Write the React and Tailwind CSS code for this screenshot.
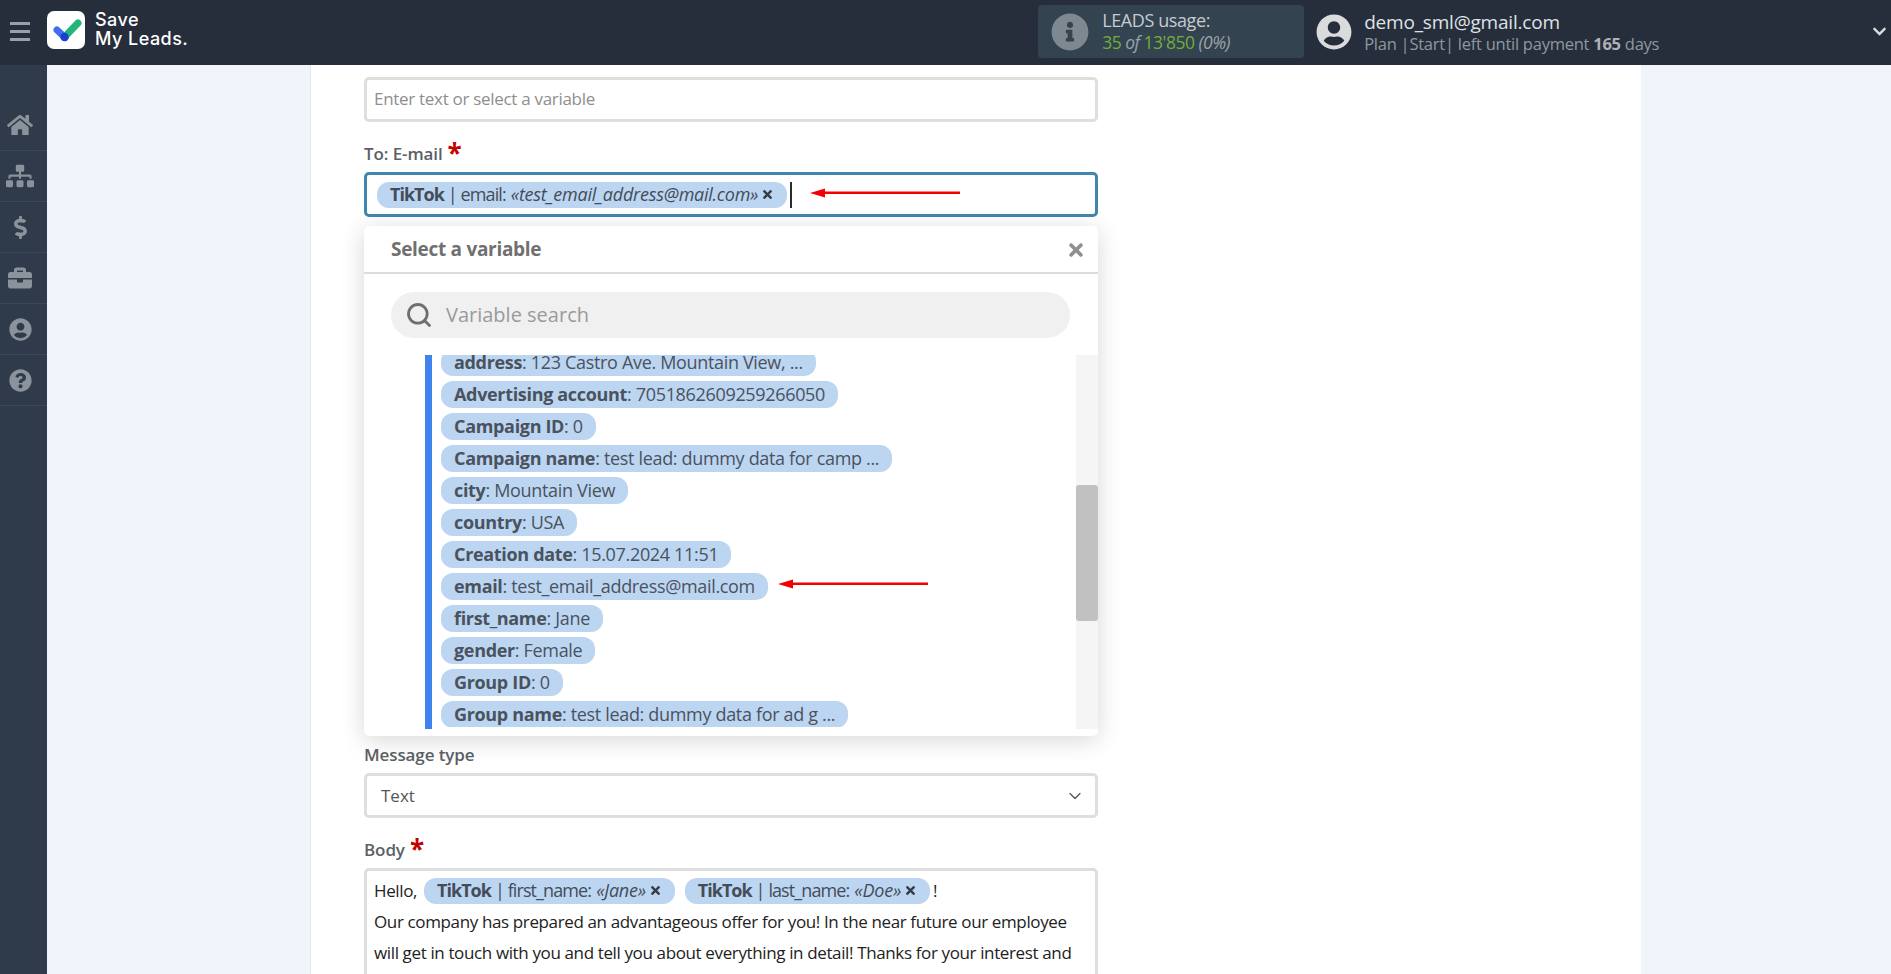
import React from 'react';
import { FaHome, FaSitemap, FaDollarSign, FaBriefcase, FaUserCircle, FaQuestionCircle, FaInfoCircle, FaTimes, FaChevronDown } from 'react-icons/fa';
import { Search, ChevronDown } from 'lucide-react';

const navIcons = [
  { Icon: FaHome, size: 26 },
  { Icon: FaSitemap, size: 28 },
  { Icon: FaDollarSign, size: 23 },
  { Icon: FaBriefcase, size: 24 },
  { Icon: FaUserCircle, size: 23 },
  { Icon: FaQuestionCircle, size: 23 },
];

const variables = [
  ['address', '123 Castro Ave. Mountain View, ...'],
  ['Advertising account', '7051862609259266050'],
  ['Campaign ID', '0'],
  ['Campaign name', 'test lead: dummy data for camp ...'],
  ['city', 'Mountain View'],
  ['country', 'USA'],
  ['Creation date', '15.07.2024 11:51'],
  ['email', 'test_email_address@mail.com'],
  ['first_name', 'Jane'],
  ['gender', 'Female'],
  ['Group ID', '0'],
  ['Group name', 'test lead: dummy data for ad g ...'],
];

function RedArrow() {
  return (
    <svg width="150" height="10" viewBox="0 0 150 10" className="shrink-0">
      <path d="M0 5 L15 0.5 L15 3.5 L150 3.5 L150 6 L15 6 L15 9.5 Z" fill="#f50000" />
    </svg>
  );
}

function Chip({ source, name, value }) {
  return (
    <span className="inline-flex h-[26px] items-center rounded-[12px] bg-[#bcd6f2] px-[13px] text-[18px] whitespace-nowrap text-[#444c58]">
      <b className="font-bold tracking-[-1px]">{source}</b>
      <span className="ml-[4px] tracking-[-0.9px]">| {name}:</span>
      <i className="ml-[5px] tracking-[-0.25px]">«{value}»</i>
      <FaTimes size={13} className="ml-[3px] text-[#343c48]" />
    </span>
  );
}

function Label({ children, required }) {
  return (
    <div className="flex h-6 items-center gap-[5px] text-[17px] font-semibold tracking-[-0.1px] text-[#5b5f66]">
      {children}
      {required && <span className="-mt-[3px] text-[26px] leading-none font-bold text-[#c40000]">*</span>}
    </div>
  );
}

function Logo() {
  return (
    <svg width="38" height="38" viewBox="0 0 38 38" className="mb-[4px]">
      <rect width="38" height="38" rx="7" fill="#ffffff" />
      <path d="M10 19 L18 26.5" stroke="#3f6ff0" strokeWidth="7" strokeLinecap="round" />
      <path d="M17.5 26 L31 12" stroke="#22b67a" strokeWidth="7" strokeLinecap="round" />
      <circle cx="17.5" cy="26" r="4.2" fill="#1c3fcf" />
    </svg>
  );
}

export default function App() {
  return (
    <div className="flex h-[974px] w-full flex-col overflow-hidden font-['Open_Sans',sans-serif]">
      {/* Top bar */}
      <header className="flex h-[65px] shrink-0 items-center bg-[#262e3b] pb-[2px]">
        <div className="flex w-[47px] justify-center pr-[7px]">
          <div className="flex w-5 flex-col gap-[5px]">
            <span className="h-[3px] bg-[#99a0a8]" />
            <span className="h-[3px] bg-[#99a0a8]" />
            <span className="h-[3px] bg-[#99a0a8]" />
          </div>
        </div>
        <Logo />
        <div className="mb-[5px] ml-[10px] font-['Inter',sans-serif] text-[18px] leading-[19px] font-medium tracking-[0.45px] text-white">
          Save<br />My Leads.
        </div>

        <div className="ml-[850px] flex h-[53px] w-[266px] items-center rounded bg-[#344350] pl-[13px]">
          <FaInfoCircle size={38} className="text-[#7d8890]" />
          <div className="ml-[13px] -mt-[1px] text-[18px] leading-[22px] tracking-[-0.4px]">
            <div className="text-[#c5cbd0]">LEADS usage:</div>
            <div className="text-[17.5px] tracking-[-0.5px] text-[#6fae3c]">35 <i className="text-[#9aa3aa]">of</i> 13'850 <i className="text-[#9aa3aa]">(0%)</i></div>
          </div>
        </div>
        <FaUserCircle size={36} className="ml-[12px] text-[#d9dbdc]" />
        <div className="ml-[12px]">
          <div className="text-[19px] leading-[24px] tracking-[-0.2px] text-[#dfe2e5]">demo_sml@gmail.com</div>
          <div className="text-[16.5px] leading-[19px] tracking-[-0.25px] text-[#8f98a1]">
            Plan |Start| left until payment <b className="text-[#adb3b9]">165</b> days
          </div>
        </div>
        <FaChevronDown size={15} className="ml-auto mr-[4px] text-[#d9dbdc]" />
      </header>

      <div className="flex min-h-0 flex-1">
        {/* Side menu */}
        <nav className="w-[47px] shrink-0 bg-[#2f3a4a] pt-[35px]">
          {navIcons.map(({ Icon, size }, i) => (
            <div key={i} className="flex h-[51px] items-center justify-center border-b border-[#3d4858] pr-[7px]">
              <Icon size={size} className="text-[#8a929c]" />
            </div>
          ))}
        </nav>

        <main className="min-w-0 flex-1 bg-[#f2f4fc]">
          <div className="ml-[263px] h-full w-[1331px] border-l border-[#e6e8ef] bg-white pt-3 pl-[53px]">
            <div className="w-[734px]">
              <div className="flex h-[45px] items-center rounded-[5px] border-[3px] border-[#dedede] pb-[2px] pl-[7px] text-[17px] tracking-[-0.3px] text-[#8e8e8e]">
                Enter text or select a variable
              </div>

              <div className="mt-5 mb-[6px]">
                <Label required>To: E-mail</Label>
              </div>

              <div className="relative mb-[526px]">
                <div className="flex h-[45px] items-center rounded-[5px] border-[3px] border-[#3f88ac] pl-[10px]">
                  <Chip source="TikTok" name="email" value="test_email_address@mail.com" />
                  <span className="ml-[3px] h-[26px] w-[2px] bg-[#2b2b2b]" />
                  <span className="ml-[18px] -mt-[3px]"><RedArrow /></span>
                </div>

                {/* Variable dropdown */}
                <div className="absolute top-[54px] left-0 h-[510px] w-full rounded-[5px] bg-white shadow-[0_4px_24px_rgba(0,0,0,0.16)]">
                  <div className="flex h-[48px] items-center justify-between border-b-2 border-[#dcdcdc] pt-[1px] pr-[12px] pl-[27px]">
                    <span className="text-[19px] font-bold tracking-[-0.3px] text-[#707070]">Select a variable</span>
                    <FaTimes size={20} className="text-[#8f8f8f]" />
                  </div>
                  <div className="mx-[27px] mt-[18px] flex h-[46px] w-[679px] items-center rounded-full bg-[#f0f0f0] pl-[14px] text-[#9a9a9a]">
                    <Search size={28} strokeWidth={2.4} className="text-[#6e6e6e]" />
                    <span className="ml-[13px] text-[20px]">Variable search</span>
                  </div>
                  <div className="mt-[17px] flex h-[374px]">
                    <div className="ml-[61px] flex h-full w-[651px] border-l-[7px] border-[#3f83ee]">
                      <div className="ml-[9px] h-[372px] min-w-0 flex-1 overflow-hidden">
                        <div className="-mt-[6px] flex flex-col items-start gap-[5px]">
                          {variables.map(([key, val]) => (
                            <div key={key} className="flex shrink-0 items-center">
                              <span className="flex h-[27px] items-center rounded-[12px] bg-[#bcd6f2] px-[13px] text-[18px] tracking-[-0.33px] whitespace-pre text-[#4a525e]">
                                <b className="font-bold">{key}</b>: {val}
                              </span>
                              {key === 'email' && <span className="ml-[10px] -mt-[6px]"><RedArrow /></span>}
                            </div>
                          ))}
                        </div>
                      </div>
                    </div>
                    <div className="h-full w-[22px] bg-[#f5f5f5] pt-[130px]">
                      <div className="h-[136px] rounded-[3px] bg-[#c1c1c1]" />
                    </div>
                  </div>
                </div>
              </div>

              <div className="mb-[6px]">
                <Label>Message type</Label>
              </div>
              <div className="flex h-[45px] items-center justify-between rounded-[5px] border-[3px] border-[#dedede] pr-[10px] pl-[14px] text-[17px] text-[#555555]">
                Text
                <ChevronDown size={20} strokeWidth={1.5} className="text-[#555555]" />
              </div>

              <div className="mt-5 mb-[6px]">
                <Label required>Body</Label>
              </div>
              <div className="h-[140px] rounded-[5px] border-[3px] border-[#dedede] px-[7px] pt-[4px] text-[17px] leading-[31px] tracking-[-0.37px] text-[#222222]">
                <div className="flex h-[31px] items-center">
                  Hello,
                  <span className="ml-[7px]"><Chip source="TikTok" name="first_name" value="Jane" /></span>
                  <span className="ml-[10px]"><Chip source="TikTok" name="last_name" value="Doe" /></span>
                  <span className="ml-[3px]">!</span>
                </div>
                <div className="whitespace-nowrap">Our company has prepared an advantageous offer for you! In the near future our employee</div>
                <div className="whitespace-nowrap">will get in touch with you and tell you about everything in detail! Thanks for your interest and</div>
              </div>
            </div>
          </div>
        </main>
      </div>
    </div>
  );
}
